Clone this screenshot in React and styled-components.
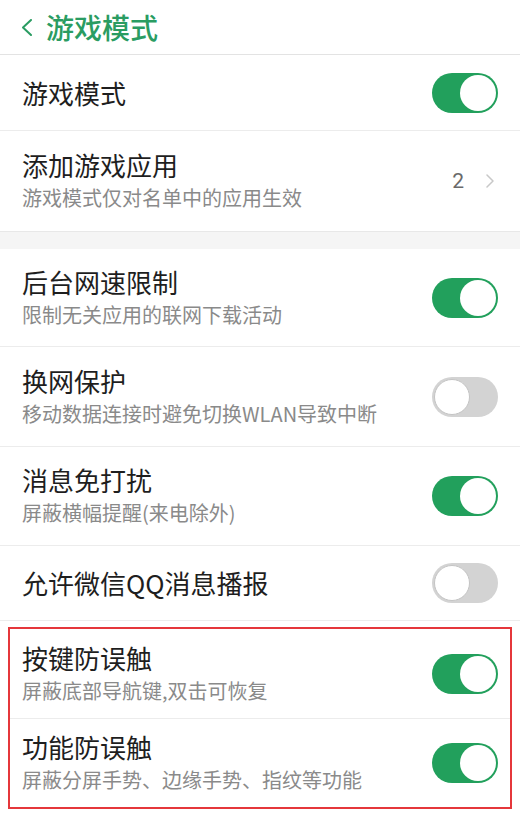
import React from 'react';
import styled, { createGlobalStyle } from 'styled-components';

const GlobalStyle = createGlobalStyle`
  html, body {
    margin: 0;
    padding: 0;
    background: #fff;
  }
  body {
    font-family: "Noto Sans CJK SC", "Noto Sans", sans-serif;
  }
`;

const Page = styled.div`
  width: 520px;
  height: 818px;
  overflow: hidden;
  background: #fff;
`;

const Header = styled.header`
  height: 55px;
  display: flex;
  align-items: center;
  gap: 14px;
  padding-left: 22px;
  border-bottom: 1px solid #e3e3e3;
  box-sizing: border-box;
`;

const HeaderTitle = styled.h1`
  margin: 0;
  font-size: 28px;
  font-weight: 500;
  color: #2a9c62;
  line-height: 1;
`;

const Row = styled.div`
  height: ${p => p.$h}px;
  display: flex;
  align-items: center;
  justify-content: space-between;
  padding: 0 ${p => p.$inset || 22}px;
  box-sizing: border-box;
  border-bottom: ${p => (p.$last ? 'none' : '1px solid #ececec')};
`;

const TextCol = styled.div`
  display: flex;
  flex-direction: column;
`;

const Title = styled.div`
  font-size: 26px;
  line-height: 32px;
  color: #1e1e1e;
`;

const Sub = styled.div`
  margin-top: 2px;
  font-size: 20px;
  line-height: 30px;
  color: #8a8a8a;
`;

const Gap = styled.div`
  height: 18px;
  background: #f5f5f5;
  border-top: 1px solid #e8e8e8;
  box-sizing: border-box;
`;

const Spacer = styled.div`
  height: 6px;
`;

const Highlight = styled.div`
  margin: 0 8px;
  border: 2px solid #e5373b;
`;

const Track = styled.div`
  width: 66px;
  height: 40px;
  border-radius: 20px;
  background: ${p => (p.$on ? '#22a05c' : '#d3d3d3')};
  display: flex;
  align-items: center;
  justify-content: ${p => (p.$on ? 'flex-end' : 'flex-start')};
  padding: 0 2px;
  box-sizing: border-box;
  flex-shrink: 0;
`;

const Knob = styled.div`
  width: 36px;
  height: 36px;
  border-radius: 50%;
  background: #fff;
  box-sizing: border-box;
  border: ${p => (p.$on ? 'none' : '1px solid #c4c4c4')};
`;

const Trail = styled.div`
  display: flex;
  align-items: center;
  gap: 22px;
  padding-right: 4px;
`;

const Count = styled.span`
  font-family: "Roboto", "Noto Sans", sans-serif;
  font-size: 21px;
  color: #6a6a6a;
`;

function Toggle({ on }) {
  return (
    <Track $on={on}>
      <Knob $on={on} />
    </Track>
  );
}

function Chevron({ color, w, h, sw, dir }) {
  const pts = dir === 'left' ? `${w - 1},1 1,${h / 2} ${w - 1},${h - 1}` : `1,1 ${w - 1},${h / 2} 1,${h - 1}`;
  return (
    <svg width={w} height={h} viewBox={`0 0 ${w} ${h}`}>
      <polyline points={pts} fill="none" stroke={color} strokeWidth={sw} strokeLinecap="round" strokeLinejoin="round" />
    </svg>
  );
}

function Item({ title, sub, on, h, inset, last }) {
  return (
    <Row $h={h} $inset={inset} $last={last}>
      <TextCol>
        <Title>{title}</Title>
        {sub && <Sub>{sub}</Sub>}
      </TextCol>
      <Toggle on={on} />
    </Row>
  );
}

export default function App() {
  return (
    <Page>
      <GlobalStyle />
      <Header>
        <Chevron color="#2a9c62" w={10} h={17} sw={2} dir="left" />
        <HeaderTitle>游戏模式</HeaderTitle>
      </Header>
      <Item title="游戏模式" on h={76} />
      <Row $h={100} $last>
        <TextCol>
          <Title>添加游戏应用</Title>
          <Sub>游戏模式仅对名单中的应用生效</Sub>
        </TextCol>
        <Trail>
          <Count>2</Count>
          <Chevron color="#c8c8c8" w={8} h={14} sw={1.5} dir="right" />
        </Trail>
      </Row>
      <Gap />
      <Item title="后台网速限制" sub="限制无关应用的联网下载活动" on h={98} />
      <Item title="换网保护" sub="移动数据连接时避免切换WLAN导致中断" on={false} h={100} />
      <Item title="消息免打扰" sub="屏蔽横幅提醒(来电除外)" on h={99} />
      <Item title="允许微信QQ消息播报" on={false} h={75} />
      <Spacer />
      <Highlight>
        <Item title="按键防误触" sub="屏蔽底部导航键,双击可恢复" on h={90} inset={12} />
        <Item title="功能防误触" sub="屏蔽分屏手势、边缘手势、指纹等功能" on h={88} inset={12} last />
      </Highlight>
    </Page>
  );
}
